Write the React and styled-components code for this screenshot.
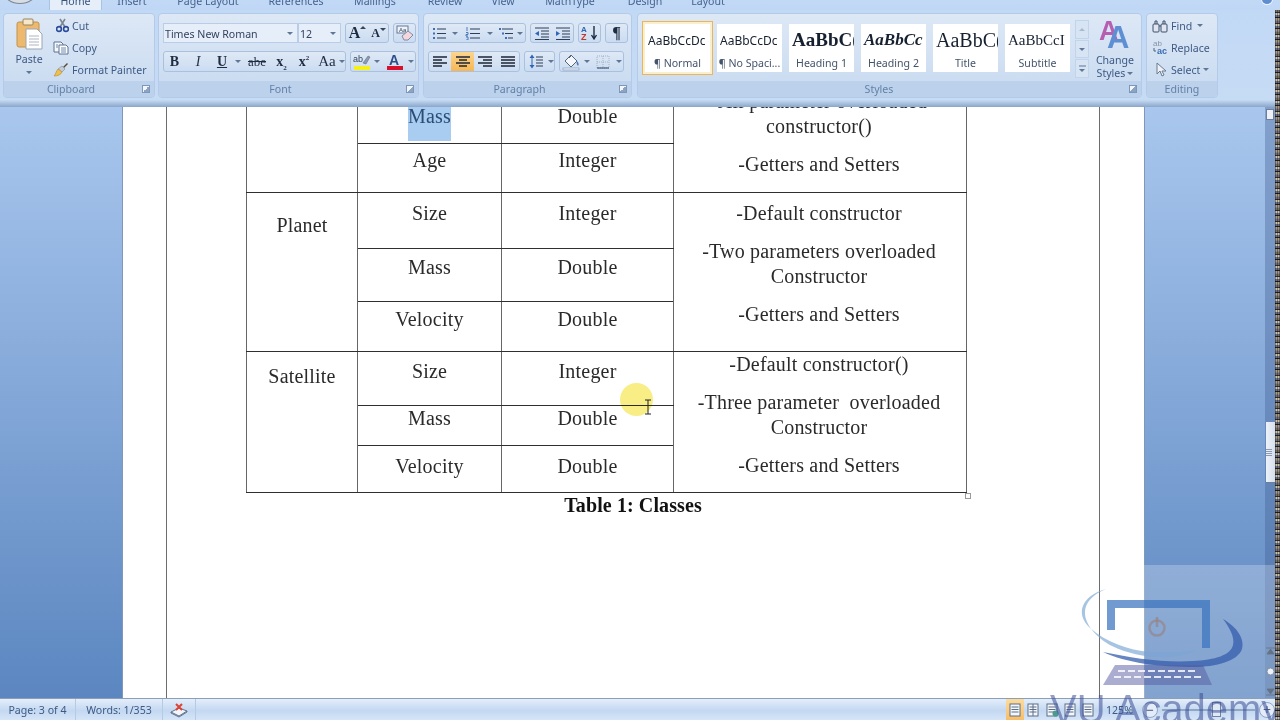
// Imports
import React from 'react';
import styled, { createGlobalStyle } from 'styled-components';

// Styles
const GlobalStyle = createGlobalStyle`
  html, body { margin: 0; padding: 0; background: #fff; }
  * { box-sizing: border-box; }
`;

const uiFont = `"Noto Sans", "Liberation Sans", sans-serif`;
const docFont = `"Liberation Serif", "Times New Roman", serif`;

const Window = styled.div`
  position: relative;
  width: 1280px;
  height: 720px;
  overflow: hidden;
  display: flex;
  flex-direction: column;
  font-family: ${uiFont};
  font-size: 10.6px;
  color: #3d5a84;
`;

const TabStrip = styled.div`
  position: relative;
  height: 10px;
  flex: none;
  display: flex;
  padding-left: 49px;
  background: linear-gradient(#c2d9f6, #bfd7f5);
  overflow: hidden;
`;

const Tab = styled.div`
  width: ${props => props.w}px;
  height: 10px;
  line-height: 2px;
  text-align: center;
  color: ${props => (props.active ? '#37557f' : '#46648f')};
  ${props => props.active && `
    background: #e6eff9;
    border-left: 1px solid #a9c3e2;
    border-right: 1px solid #a9c3e2;
  `}
`;

const OfficeOrb = styled.div`
  position: absolute;
  left: 4px;
  top: -18px;
  width: 32px;
  height: 22px;
  border-radius: 50%;
  background: #d8dde4;
  border: 1px solid #7d8794;
`;

const HelpOrb = styled.div`
  position: absolute;
  right: 7px;
  top: -6px;
  width: 12px;
  height: 11px;
  border-radius: 50%;
  background: #5f8ed0;
  border: 1px solid #f0f6ff;
`;

const Ribbon = styled.div`
  height: 97px;
  flex: none;
  display: flex;
  gap: 4px;
  padding: 3px 0 0 3px;
  background: linear-gradient(#c2d9f6 0, #c6dbf4 90px, #8aa6c9 97px);
`;

const Group = styled.section`
  width: ${props => props.w}px;
  height: 85px;
  flex: none;
  display: flex;
  flex-direction: column;
  margin-left: ${props => props.ml || 0}px;
  border: 1px solid #b3cbe8;
  border-radius: 4px;
  overflow: hidden;
  background: linear-gradient(#dde8f6, #c8daf0);
`;

const GroupBody = styled.div`
  flex: 1;
  min-height: 0;
  display: flex;
  padding: ${props => props.pad || '0'};
`;

const GroupLabel = styled.div`
  position: relative;
  height: 16px;
  flex: none;
  line-height: 17px;
  text-align: center;
  padding-right: ${props => (props.right === undefined ? 16 : props.right)}px;
  color: #6480a6;
  background: #bcd2ec;
`;

const Launcher = styled.span`
  position: absolute;
  right: 4px;
  top: 4px;
  width: 8px;
  height: 8px;
  border: 1px solid #7f97b6;
  background: linear-gradient(135deg, #f2f6fb 50%, #8ba4c4 50%);
`;

const PasteButton = styled.div`
  width: 48px;
  flex: none;
  display: flex;
  flex-direction: column;
  align-items: center;
  padding-top: 4px;
  line-height: 13px;
`;

const PasteLabel = styled.div`
  margin: 3px 0 5px;
`;

const SmallColumn = styled.div`
  display: flex;
  flex-direction: column;
  gap: 5px;
  padding-top: 3px;
`;

const SmallAction = styled.div`
  height: 17px;
  display: flex;
  align-items: center;
  gap: ${props => props.gap || 3}px;
  white-space: nowrap;
`;

const IconSlot = styled.span`
  display: block;
  margin-left: ${props => props.left || 0}px;
`;

const Stack = styled.div`
  flex: 1;
  display: flex;
  flex-direction: column;
  gap: 8px;
`;

const Row = styled.div`
  display: flex;
  gap: 4px;
`;

const GrowWrap = styled.div`
  display: flex;
  align-items: flex-start;
`;

const Field = styled.div`
  width: ${props => props.w}px;
  height: 20px;
  display: flex;
  align-items: center;
  justify-content: space-between;
  padding: 1px 4px 0 1px;
  background: #e6eef9;
  border: 1px solid #b9cde6;
  color: #33445e;
`;

const FieldPair = styled.div`
  display: flex;
`;

const ButtonGroup = styled.div`
  height: ${props => props.h || 21}px;
  display: flex;
  border: 1px solid #a9c1df;
  border-radius: 3px;
  background: linear-gradient(#dfe9f6, #cbdcf1);
  overflow: hidden;
`;

const ToolButton = styled.div`
  width: ${props => props.w}px;
  flex: none;
  display: flex;
  align-items: center;
  justify-content: center;
  color: #1d2c42;
  background: ${props => (props.active ? 'linear-gradient(#fbd58e, #f7b655)' : 'none')};
`;

const Glyph = styled.span`
  font-family: ${docFont};
  font-size: ${props => props.size || 14}px;
  font-weight: ${props => (props.plain ? 400 : 700)};
  font-style: ${props => (props.italic ? 'italic' : 'normal')};
  text-decoration: ${props => props.line || 'none'};
  line-height: 1;
  color: ${props => props.color || '#1d2c42'};
`;

const Sub = styled.sub`
  font-size: 7px;
  line-height: 0;
`;

const Sup = styled.sup`
  font-size: 7px;
  line-height: 0;
`;

const Caret = styled.i`
  display: block;
  flex: none;
  width: 0;
  height: 0;
  border-left: 3px solid transparent;
  border-right: 3px solid transparent;
  border-top: 3px solid ${props => props.color || '#5f7796'};
  margin-left: ${props => props.gap || 0}px;
  transform: ${props => (props.up ? 'rotate(180deg)' : 'none')};
`;

const Gallery = styled.div`
  display: flex;
  gap: 7px;
  padding: 10px 0 0 7px;
`;

const StyleTile = styled.div`
  width: 65px;
  height: 48px;
  flex: none;
  display: flex;
  flex-direction: column;
  align-items: center;
  background: #fff;
  overflow: hidden;
  ${props => props.selected && `
    box-shadow: 0 0 0 2px #fbeecb, 0 0 0 3px #e9b65f;
  `}
`;

const TileSample = styled.div`
  height: 32px;
  width: 100%;
  padding-left: 3px;
  display: flex;
  align-items: center;
  white-space: nowrap;
  overflow: hidden;
  font-family: ${props => (props.serif ? docFont : uiFont)};
  font-size: ${props => props.size}px;
  font-weight: ${props => (props.bold ? 700 : 400)};
  font-style: ${props => (props.italic ? 'italic' : 'normal')};
  color: #16202f;
`;

const TileName = styled.div`
  line-height: 14px;
  white-space: nowrap;
  color: #44546b;
`;

const GalleryArrows = styled.div`
  width: 14px;
  height: 58px;
  flex: none;
  margin: 6px 0 0 5px;
  display: flex;
  flex-direction: column;
  gap: 1px;
`;

const GalleryArrow = styled.div`
  flex: 1;
  display: flex;
  flex-direction: column;
  align-items: center;
  justify-content: center;
  gap: 2px;
  background: #d7e4f4;
  border: 1px solid #c1d4eb;
`;

const ChangeStyles = styled.div`
  width: 44px;
  flex: none;
  margin-left: 4px;
  padding-top: 5px;
  display: flex;
  flex-direction: column;
  align-items: center;
  line-height: 13px;
  text-align: center;
`;

const ChangeLabel = styled.div`
  margin-top: ${props => props.top || 0}px;
  display: flex;
  align-items: center;
  gap: 2px;
`;

const DocArea = styled.main`
  position: relative;
  flex: 1;
  min-height: 0;
  display: flex;
  overflow: hidden;
  padding-left: 123px;
  background: linear-gradient(#a9c7ee, #5b86c0);
`;

const Page = styled.div`
  width: 1021px;
  flex: none;
  padding: 0 44px 0 43px;
  background: #fff;
  box-shadow: -1px 0 0 #7f97b8, 1px 0 0 #7f97b8;
`;

const PageFrame = styled.div`
  display: flow-root;
  height: 100%;
  padding-left: 79px;
  border-left: 1px solid #6d6d6d;
  border-right: 1px solid #6d6d6d;
  font-family: ${docFont};
  font-size: 20px;
  line-height: 25px;
  letter-spacing: 0.2px;
  color: #2a2a2a;
`;

const TableWrap = styled.div`
  position: relative;
  width: 720px;
  margin-top: -20px;
`;

const ClassTable = styled.table`
  width: 720px;
  table-layout: fixed;
  border-collapse: collapse;
`;

const Column = styled.col`
  width: ${props => props.w}px;
`;

const TableRow = styled.tr`
  height: ${props => props.h}px;
`;

const Cell = styled.td`
  padding: ${props => props.top || 0}px ${props => (props.wide ? 2 : 0)}px 0 0;
  vertical-align: top;
  text-align: center;
  border-style: solid;
  border-width: 1px;
  border-color: #2f2f2f #666;
`;

const CellLine = styled.p`
  margin: 0 0 ${props => (props.gap === undefined ? 13 : props.gap)}px;
`;

const Selected = styled.span`
  padding: 9px 0 14px;
  background: #a9cdf0;
  color: #2b4c78;
`;

const ResizeHandle = styled.div`
  position: absolute;
  right: -5px;
  bottom: -6px;
  width: 6px;
  height: 6px;
  background: #fff;
  border: 1px solid #9a9a9a;
`;

const Caption = styled.div`
  margin-left: -79px;
  text-align: center;
  font-weight: 700;
  letter-spacing: 0.1px;
  color: #111;
`;

const Scrollbar = styled.div`
  position: relative;
  width: 10px;
  flex: none;
  margin-left: 121px;
  display: flex;
  flex-direction: column;
  justify-content: flex-end;
  align-items: center;
  gap: 12px;
  padding-bottom: 2px;
  background: rgba(60, 90, 140, 0.35);
`;

const RulerToggle = styled.div`
  position: absolute;
  left: 1px;
  top: 2px;
  width: 8px;
  height: 11px;
  border: 1px solid #6b7f9b;
  background: #eef2f8;
`;

const ScrollThumb = styled.div`
  position: absolute;
  left: 1px;
  top: 315px;
  width: 9px;
  height: 61px;
  display: flex;
  align-items: center;
  background: linear-gradient(90deg, #eef2f9, #d5dfee);
  border-bottom: 1px solid #6b7f9b;
`;

const ThumbGrip = styled.div`
  width: 6px;
  height: 7px;
  background: repeating-linear-gradient(#8c9ab0 0 1px, transparent 1px 2px);
`;

const NoiseStrip = styled.div`
  position: absolute;
  right: 0;
  top: 10px;
  bottom: 0;
  width: 5px;
  z-index: 5;
  background:
    repeating-linear-gradient(90deg, rgba(0, 0, 0, 0.35) 0 1px, transparent 1px 2px),
    repeating-linear-gradient(#77715f 0 2px, #2e2a45 2px 3px, #c9c2a4 3px 5px, #6a6f86 5px 7px, #1f1f22 7px 8px, #a89a7d 8px 10px, #8d84a6 10px 11px);
`;

const Highlighter = styled.div`
  position: absolute;
  left: 620px;
  top: 383px;
  width: 33px;
  height: 33px;
  border-radius: 50%;
  background: #f8ee85;
  mix-blend-mode: multiply;
`;

const IBeam = styled.svg`
  position: absolute;
  left: 644px;
  top: 399px;
`;

const WatermarkPanel = styled.div`
  position: absolute;
  left: 1144px;
  top: 565px;
  width: 136px;
  height: 133px;
  background: rgba(255, 255, 255, 0.24);
`;

const WatermarkLogo = styled.svg`
  position: absolute;
  left: 1050px;
  top: 565px;
  z-index: 3;
`;

const WatermarkText = styled.div`
  position: absolute;
  left: 1050px;
  top: 686px;
  z-index: 3;
  font-family: "Liberation Sans", sans-serif;
  font-size: 40px;
  line-height: 46px;
  white-space: nowrap;
  color: rgba(58, 76, 150, 0.55);
`;

const StatusBar = styled.footer`
  height: 22px;
  flex: none;
  display: flex;
  align-items: stretch;
  border-top: 1px solid #8c9fb8;
  background: linear-gradient(#e4eefb, #c3d8f1 55%, #d6e5f8);
  color: #3d5a84;
`;

const StatusCell = styled.div`
  width: ${props => props.w}px;
  flex: none;
  display: flex;
  align-items: center;
  justify-content: center;
  white-space: nowrap;
  border-right: 1px solid #b5cae4;
`;

const StatusRight = styled.div`
  margin-left: auto;
  display: flex;
  align-items: center;
  padding-right: 5px;
`;

const ViewButton = styled.div`
  width: 18.2px;
  height: 21px;
  display: flex;
  align-items: center;
  justify-content: center;
  background: ${props => (props.active ? 'linear-gradient(#fbdc9e, #f6bd69)' : 'none')};
`;

const ZoomLabel = styled.div`
  width: 45px;
  text-align: center;
`;

const ZoomRound = styled.div`
  width: 16px;
  height: 16px;
  flex: none;
  display: flex;
  align-items: center;
  justify-content: center;
  border-radius: 50%;
  border: 1px solid #8fa6c4;
  background: #e3ecf8;
  font-size: 14px;
  line-height: 1;
  color: #4a5f7d;
`;

const ZoomTrack = styled.div`
  position: relative;
  width: 93px;
  height: 2px;
  margin: 0 4px;
  background: #8fa6c4;
`;

const ZoomThumb = styled.div`
  position: absolute;
  left: 50px;
  top: -7px;
  width: 9px;
  height: 15px;
  border: 1px solid #6f84a1;
  background: #dfe8f5;
`;

const IconSvg = styled.svg`
  display: block;
  flex: none;
`;

// Icons
const Svg = ({ w, h, children }) => (
  <IconSvg width={w} height={h} viewBox={`0 0 ${w} ${h}`}>
    {children}
  </IconSvg>
);

const PasteIcon = () => (
  <Svg w={27} h={32}>
    <rect x="1" y="4" width="22" height="25" rx="2" fill="#edb96e" stroke="#c4914a" />
    <rect x="7" y="1" width="10" height="6" rx="1" fill="#f6e7c6" stroke="#96845f" />
    <path d="M10 11h11l5 5v15H10z" fill="#fff" stroke="#9aa5b5" />
    <path d="M13 18h10M13 21h10M13 24h10M13 27h10" stroke="#aeb6c2" />
  </Svg>
);

const CutIcon = () => (
  <Svg w={13} h={15}>
    <path d="M4 1l5 8M9 1L4 9" stroke="#7c8794" strokeWidth="1.6" fill="none" />
    <circle cx="3" cy="11" r="2.4" fill="none" stroke="#2b4c9b" strokeWidth="1.6" />
    <circle cx="10" cy="11" r="2.4" fill="none" stroke="#2b4c9b" strokeWidth="1.6" />
  </Svg>
);

const CopyIcon = () => (
  <Svg w={16} h={14}>
    <path d="M1 1h7l2 2v8H1z" fill="#f5f8fc" stroke="#5d7392" />
    <path d="M6 4h7l2 2v7H6z" fill="#fff" stroke="#5d7392" />
    <path d="M8 7h5M8 9h5M8 11h5M3 4h2M3 6h2" stroke="#6d89b0" />
  </Svg>
);

const BrushIcon = () => (
  <Svg w={16} h={15}>
    <path d="M10 5l4-4 1 1-4 4z" fill="#5b4a33" />
    <path d="M9 4l3 3-3 3-4-3z" fill="#c6ccd6" stroke="#7e8898" strokeWidth=".6" />
    <path d="M5 7l4 3c-1 3-5 4-8 4 2-2 2-5 4-7z" fill="#efc04c" stroke="#b58a2a" strokeWidth=".6" />
  </Svg>
);

const GrowIcon = ({ size, up }) => (
  <GrowWrap>
    <Glyph size={size}>A</Glyph>
    <IconSvg width="6" height="4">
      <path d={up ? 'M0 4l3-3 3 3z' : 'M0 1l3 3 3-3z'} fill="#33465f" />
    </IconSvg>
  </GrowWrap>
);

const ClearIcon = () => (
  <Svg w={18} h={16}>
    <rect x="1" y="1" width="11" height="7" fill="#eef3fa" stroke="#65789a" />
    <text x="3" y="7" fontSize="6" fontFamily="Liberation Sans" fill="#33465f">Aa</text>
    <path d="M6 11l6-5 5 4-5 5H8z" fill="#f4d6dc" stroke="#7d8ca3" />
  </Svg>
);

const HighlightIcon = () => (
  <Svg w={18} h={18}>
    <text x="0" y="9" fontSize="9" fontFamily="Liberation Sans" fill="#33465f">ab</text>
    <path d="M10 10l5-7 2 1-4 7z" fill="#8b9cb5" stroke="#52637c" strokeWidth=".5" />
    <rect x="1" y="13" width="16" height="4" fill="#f6f01a" />
  </Svg>
);

const FontColorIcon = () => (
  <Svg w={16} h={18}>
    <text x="2" y="12" fontSize="14" fontWeight="700" fontFamily="Liberation Sans" fill="#2f4d86">A</text>
    <rect x="0" y="13" width="16" height="4" fill="#d9102a" />
  </Svg>
);

const BulletsIcon = () => (
  <Svg w={14} h={13}>
    <path d="M5 2h9M5 6.500h9M5 11h9" stroke="#2c3e58" strokeWidth="1.2" />
    <path d="M1 1h2v2H1zM1 5.500h2v2H1zM1 10h2v2H1z" fill="#3f6fb3" />
  </Svg>
);

const NumbersIcon = () => (
  <Svg w={15} h={13}>
    <path d="M5 2h10M5 6.500h10M5 11h10" stroke="#2c3e58" strokeWidth="1.2" />
    <path d="M2 0v4M1 5.500h2v2H1v1.500h2M1 10h2v3H1" stroke="#3f6fb3" fill="none" strokeWidth=".9" />
  </Svg>
);

const MultiLevelIcon = () => (
  <Svg w={16} h={13}>
    <path d="M4 2h11M7 6.500h8M10 11h5" stroke="#2c3e58" />
    <path d="M1 1h2v2H1zM4 5.500h2v2H4zM7 10h2v2H7z" fill="#3f6fb3" />
  </Svg>
);

const IndentIcon = ({ inward }) => (
  <Svg w={16} h={13}>
    <path d="M1 1h14M7 4h8M7 7h8M7 10h8M1 12.500h14" stroke="#2c3e58" />
    <path d={inward ? 'M1 4l4 2.500L1 9z' : 'M5 4L1 6.500 5 9z'} fill="#2f66b5" />
  </Svg>
);

const SortIcon = () => (
  <Svg w={18} h={16}>
    <text x="0" y="7" fontSize="8" fontWeight="700" fontFamily="Liberation Sans" fill="#2f66b5">A</text>
    <text x="0" y="15" fontSize="9" fontWeight="700" fontFamily="Liberation Sans" fill="#c0392b">Z</text>
    <path d="M13 1v12M10.500 10l2.500 4 2.500-4" stroke="#1d2c42" strokeWidth="1.4" fill="none" />
  </Svg>
);

const alignRows = {
  left: ['M1 2h14', 'M1 5h9', 'M1 8h14', 'M1 11h9'],
  center: ['M1 2h14', 'M4 5h8', 'M1 8h14', 'M4 11h8'],
  right: ['M1 2h14', 'M6 5h9', 'M1 8h14', 'M6 11h9'],
  both: ['M1 2h14', 'M1 5h14', 'M1 8h14', 'M1 11h14'],
};

const AlignIcon = ({ mode }) => (
  <Svg w={16} h={13}>
    {alignRows[mode].map(d => <path key={d} d={d} stroke="#1b2536" strokeWidth="1.3" />)}
  </Svg>
);

const LineSpaceIcon = () => (
  <Svg w={14} h={15}>
    <path d="M3 3v9" stroke="#2f66b5" />
    <path d="M0.500 4L3 0.500 5.500 4zM0.500 11L3 14.500 5.500 11z" fill="#2f66b5" />
    <path d="M7 3h7M7 6h7M7 9h7M7 12h7" stroke="#2c3e58" strokeWidth="1.1" />
  </Svg>
);

const ShadingIcon = () => (
  <Svg w={20} h={18}>
    <path d="M4 8l6-6 6 6-6 6z" fill="#f4f7fb" stroke="#55667f" />
    <path d="M16 8c2 2 2 4 1 5-1-1-2-3-1-5z" fill="#4d78b8" />
    <path d="M8 5l3-3" stroke="#55667f" />
    <rect x="2" y="15" width="16" height="2" fill="#e8f0fa" stroke="#7e92ae" strokeWidth=".6" />
  </Svg>
);

const BordersIcon = () => (
  <Svg w={14} h={14}>
    <rect x="1" y="1" width="12" height="12" fill="none" stroke="#9fb0c6" strokeDasharray="1 1" />
    <path d="M1 7h12M7 1v12" stroke="#9fb0c6" strokeDasharray="1 1" />
    <path d="M1 13h12" stroke="#2c3e58" />
  </Svg>
);

const ChangeStylesIcon = () => (
  <Svg w={36} h={30}>
    <text x="2" y="21" fontSize="27" fontWeight="700" fontFamily="Liberation Sans" fill="#b65fb0">A</text>
    <text x="10" y="29" fontSize="31" fontWeight="700" fontFamily="Liberation Sans" fill="#5f8fd3">A</text>
  </Svg>
);

const FindIcon = () => (
  <Svg w={16} h={14}>
    <rect x="1" y="5" width="6" height="8" rx="1" fill="#dfe6ef" stroke="#3d4f6b" />
    <rect x="9" y="5" width="6" height="8" rx="1" fill="#dfe6ef" stroke="#3d4f6b" />
    <path d="M3 5V2h2v3M11 5V2h2v3M7 7h2" stroke="#3d4f6b" fill="none" />
  </Svg>
);

const ReplaceIcon = () => (
  <Svg w={18} h={17}>
    <text x="1" y="7" fontSize="8" fontFamily="Liberation Sans" fill="#8493a8">ab</text>
    <text x="5" y="15" fontSize="9" fontWeight="700" fontFamily="Liberation Sans" fill="#3a6cb3">ac</text>
    <path d="M2 9v3h2" stroke="#51627b" fill="none" />
  </Svg>
);

const SelectIcon = () => (
  <Svg w={13} h={16}>
    <path d="M2 1v11l3-3 2 5 2-1-2-4h4z" fill="#eef2f7" stroke="#6a7a90" />
  </Svg>
);

const SpellIcon = () => (
  <Svg w={18} h={16}>
    <path d="M1 10l8-4 8 3-8 5z" fill="#f2f5fa" stroke="#62738e" />
    <path d="M1 10v1l8 4 8-5V9" fill="none" stroke="#62738e" />
    <path d="M6 2l6 6M12 2L6 8" stroke="#dc4435" strokeWidth="2" />
  </Svg>
);

const ViewIcon = ({ kind }) => (
  <Svg w={14} h={14}>
    <rect x="2" y="1" width="10" height="12" fill="#f4f7fb" stroke="#5d6f89" />
    <path d="M3.500 4h7M3.500 6.500h7M3.500 9h7" stroke="#5d6f89" />
    {kind === 'read' && <path d="M7 1v12" stroke="#5d6f89" />}
    {kind === 'web' && <circle cx="10.500" cy="10.500" r="3" fill="#4c9a8e" />}
  </Svg>
);

const BrowseUp = () => (
  <Svg w={9} h={8}>
    <path d="M0 1h9M4.500 2L8 7H1z" stroke="#33465f" strokeWidth=".8" fill="#33465f" />
  </Svg>
);

const BrowseDot = () => (
  <Svg w={9} h={9}>
    <circle cx="4.500" cy="4.500" r="3.500" fill="#e8eef7" stroke="#5d6f89" />
  </Svg>
);

const BrowseDown = () => (
  <Svg w={9} h={8}>
    <path d="M0 7h9M4.500 6L8 1H1z" stroke="#33465f" strokeWidth=".8" fill="#33465f" />
  </Svg>
);

// Data
const tabs = [
  ['Home', 53, true], ['Insert', 60], ['Page Layout', 92], ['References', 84], ['Mailings', 74],
  ['Review', 66], ['View', 50], ['MathType', 84], ['Design', 66], ['Layout', 60],
];

const tiles = [
  { name: '¶ Normal', sample: 'AaBbCcDc', size: 12, selected: true },
  { name: '¶ No Spaci...', sample: 'AaBbCcDc', size: 12 },
  { name: 'Heading 1', sample: 'AaBbC(', size: 19, serif: true, bold: true },
  { name: 'Heading 2', sample: 'AaBbCc', size: 17, serif: true, bold: true, italic: true },
  { name: 'Title', sample: 'AaBbC(', size: 20, serif: true },
  { name: 'Subtitle', sample: 'AaBbCcI', size: 15, serif: true },
];

// Main
const App = () => (
  <Window>
    <GlobalStyle />

    {/* Tabs */}
    <TabStrip>
      <OfficeOrb />
      {tabs.map(([name, w, active]) => <Tab key={name} w={w} active={active}>{name}</Tab>)}
      <HelpOrb />
    </TabStrip>

    {/* Ribbon */}
    <Ribbon>
      <Group w={152}>
        <GroupBody pad="0 0 0 1px">
          <PasteButton>
            <PasteIcon />
            <PasteLabel>Paste</PasteLabel>
            <Caret />
          </PasteButton>
          <SmallColumn>
            <SmallAction><IconSlot left={3}><CutIcon /></IconSlot>Cut</SmallAction>
            <SmallAction><CopyIcon />Copy</SmallAction>
            <SmallAction><BrushIcon />Format Painter</SmallAction>
          </SmallColumn>
        </GroupBody>
        <GroupLabel>Clipboard<Launcher /></GroupLabel>
      </Group>

      <Group w={261} ml={-1}>
        <GroupBody pad="9px 0 0 4px">
          <Stack>
            <Row>
              <FieldPair>
                <Field w={135}>Times New Roman<Caret /></Field>
                <Field w={43}>12<Caret /></Field>
              </FieldPair>
              <ButtonGroup h={20}>
                <ToolButton w={23}><GrowIcon size={16} up /></ToolButton>
                <ToolButton w={19}><GrowIcon size={12} /></ToolButton>
              </ButtonGroup>
              <ButtonGroup h={20}>
                <ToolButton w={21}><ClearIcon /></ToolButton>
              </ButtonGroup>
            </Row>
            <Row>
              <ButtonGroup>
                <ToolButton w={21}><Glyph>B</Glyph></ToolButton>
                <ToolButton w={26}><Glyph italic plain>I</Glyph></ToolButton>
                <ToolButton w={22}><Glyph line="underline">U</Glyph></ToolButton>
                <ToolButton w={10}><Caret /></ToolButton>
                <ToolButton w={28}><Glyph size={13} plain line="line-through">abe</Glyph></ToolButton>
                <ToolButton w={21}><Glyph>x<Sub>2</Sub></Glyph></ToolButton>
                <ToolButton w={24}><Glyph>x<Sup>2</Sup></Glyph></ToolButton>
                <ToolButton w={22}><Glyph size={15} plain>Aa</Glyph></ToolButton>
                <ToolButton w={7}><Caret /></ToolButton>
              </ButtonGroup>
              <ButtonGroup>
                <ToolButton w={21}><HighlightIcon /></ToolButton>
                <ToolButton w={10}><Caret /></ToolButton>
                <ToolButton w={25}><FontColorIcon /></ToolButton>
                <ToolButton w={8}><Caret /></ToolButton>
              </ButtonGroup>
            </Row>
          </Stack>
        </GroupBody>
        <GroupLabel>Font<Launcher /></GroupLabel>
      </Group>

      <Group w={209}>
        <GroupBody pad="9px 0 0 4px">
          <Stack>
            <Row>
              <ButtonGroup h={20}>
                <ToolButton w={20}><BulletsIcon /></ToolButton>
                <ToolButton w={12}><Caret /></ToolButton>
                <ToolButton w={23}><NumbersIcon /></ToolButton>
                <ToolButton w={12}><Caret /></ToolButton>
                <ToolButton w={19}><MultiLevelIcon /></ToolButton>
                <ToolButton w={10}><Caret /></ToolButton>
              </ButtonGroup>
              <ButtonGroup h={20}>
                <ToolButton w={21}><IndentIcon /></ToolButton>
                <ToolButton w={21}><IndentIcon inward /></ToolButton>
              </ButtonGroup>
              <ButtonGroup h={20}>
                <ToolButton w={21}><SortIcon /></ToolButton>
              </ButtonGroup>
              <ButtonGroup h={20}>
                <ToolButton w={21}><Glyph size={16}>¶</Glyph></ToolButton>
              </ButtonGroup>
            </Row>
            <Row>
              <ButtonGroup>
                <ToolButton w={22}><AlignIcon mode="left" /></ToolButton>
                <ToolButton w={23} active><AlignIcon mode="center" /></ToolButton>
                <ToolButton w={22}><AlignIcon mode="right" /></ToolButton>
                <ToolButton w={23}><AlignIcon mode="both" /></ToolButton>
              </ButtonGroup>
              <ButtonGroup>
                <ToolButton w={22}><LineSpaceIcon /></ToolButton>
                <ToolButton w={7}><Caret /></ToolButton>
              </ButtonGroup>
              <ButtonGroup>
                <ToolButton w={22}><ShadingIcon /></ToolButton>
                <ToolButton w={9}><Caret /></ToolButton>
                <ToolButton w={23}><BordersIcon /></ToolButton>
                <ToolButton w={9}><Caret /></ToolButton>
              </ButtonGroup>
            </Row>
          </Stack>
        </GroupBody>
        <GroupLabel>Paragraph<Launcher /></GroupLabel>
      </Group>

      <Group w={505} ml={1}>
        <GroupBody>
          <Gallery>
            {tiles.map(t => (
              <StyleTile key={t.name} selected={t.selected}>
                <TileSample size={t.size} serif={t.serif} bold={t.bold} italic={t.italic}>{t.sample}</TileSample>
                <TileName>{t.name}</TileName>
              </StyleTile>
            ))}
          </Gallery>
          <GalleryArrows>
            <GalleryArrow><Caret up color="#a9b9cf" /></GalleryArrow>
            <GalleryArrow><Caret /></GalleryArrow>
            <GalleryArrow>
              <IconSvg width="7" height="2"><path d="M0 1h7" stroke="#5f7796" /></IconSvg>
              <Caret />
            </GalleryArrow>
          </GalleryArrows>
          <ChangeStyles>
            <ChangeStylesIcon />
            <ChangeLabel top={5}>Change</ChangeLabel>
            <ChangeLabel>Styles<Caret /></ChangeLabel>
          </ChangeStyles>
        </GroupBody>
        <GroupLabel right={21}>Styles<Launcher /></GroupLabel>
      </Group>

      <Group w={72}>
        <GroupBody pad="0 0 0 5px">
          <SmallColumn>
            <SmallAction><FindIcon />Find<Caret gap={2} /></SmallAction>
            <SmallAction gap={1}><ReplaceIcon />Replace</SmallAction>
            <SmallAction><IconSlot left={3}><SelectIcon /></IconSlot>Select<Caret /></SmallAction>
          </SmallColumn>
        </GroupBody>
        <GroupLabel right={0}>Editing</GroupLabel>
      </Group>
    </Ribbon>

    {/* Document */}
    <DocArea>
      <Page>
        <PageFrame>
          <TableWrap>
            <ClassTable>
              <colgroup>
                <Column w={111} />
                <Column w={144} />
                <Column w={172} />
                <Column w={293} />
              </colgroup>
              <tbody>
                <TableRow h={56}>
                  <Cell rowSpan={2} />
                  <Cell top={16}><Selected>Mass</Selected></Cell>
                  <Cell top={16}>Double</Cell>
                  <Cell rowSpan={2} top={1} wide>
                    <CellLine gap={0}>-All parameter overloaded</CellLine>
                    <CellLine>constructor()</CellLine>
                    <CellLine>-Getters and Setters</CellLine>
                  </Cell>
                </TableRow>
                <TableRow h={49}>
                  <Cell top={4}>Age</Cell>
                  <Cell top={4}>Integer</Cell>
                </TableRow>
                <TableRow h={56}>
                  <Cell rowSpan={3} top={20}>Planet</Cell>
                  <Cell top={8}>Size</Cell>
                  <Cell top={8}>Integer</Cell>
                  <Cell rowSpan={3} top={8} wide>
                    <CellLine gap={13}>-Default constructor</CellLine>
                    <CellLine gap={0}>-Two parameters overloaded</CellLine>
                    <CellLine>Constructor</CellLine>
                    <CellLine>-Getters and Setters</CellLine>
                  </Cell>
                </TableRow>
                <TableRow h={53}>
                  <Cell top={6}>Mass</Cell>
                  <Cell top={6}>Double</Cell>
                </TableRow>
                <TableRow h={50}>
                  <Cell top={5}>Velocity</Cell>
                  <Cell top={5}>Double</Cell>
                </TableRow>
                <TableRow h={54}>
                  <Cell rowSpan={3} top={12}>Satellite</Cell>
                  <Cell top={7}>Size</Cell>
                  <Cell top={7}>Integer</Cell>
                  <Cell rowSpan={3} wide>
                    <CellLine>-Default constructor()</CellLine>
                    <CellLine gap={0}>-Three parameter&nbsp; overloaded</CellLine>
                    <CellLine>Constructor</CellLine>
                    <CellLine gap={0}>-Getters and Setters</CellLine>
                  </Cell>
                </TableRow>
                <TableRow h={40}>
                  <Cell>Mass</Cell>
                  <Cell>Double</Cell>
                </TableRow>
                <TableRow h={47}>
                  <Cell top={8}>Velocity</Cell>
                  <Cell top={8}>Double</Cell>
                </TableRow>
              </tbody>
            </ClassTable>
            <ResizeHandle />
          </TableWrap>
          <Caption>Table 1: Classes</Caption>
        </PageFrame>
      </Page>
      <Scrollbar>
        <RulerToggle />
        <ScrollThumb><ThumbGrip /></ScrollThumb>
        <BrowseUp />
        <BrowseDot />
        <BrowseDown />
      </Scrollbar>
    </DocArea>

    {/* Status bar */}
    <StatusBar>
      <StatusCell w={76}>Page: 3 of 4</StatusCell>
      <StatusCell w={87}>Words: 1/353</StatusCell>
      <StatusCell w={33}><SpellIcon /></StatusCell>
      <StatusRight>
        <ViewButton active><ViewIcon /></ViewButton>
        <ViewButton><ViewIcon kind="read" /></ViewButton>
        <ViewButton><ViewIcon kind="web" /></ViewButton>
        <ViewButton><ViewIcon /></ViewButton>
        <ViewButton><ViewIcon /></ViewButton>
        <ZoomLabel>125%</ZoomLabel>
        <ZoomRound>−</ZoomRound>
        <ZoomTrack><ZoomThumb /></ZoomTrack>
        <ZoomRound>+</ZoomRound>
      </StatusRight>
    </StatusBar>

    {/* Overlays */}
    <Highlighter />
    <IBeam width="8" height="16" viewBox="0 0 8 16">
      <path d="M1 1h6M4 1v14M1 15h6" stroke="#222" fill="none" />
    </IBeam>
    <WatermarkPanel />
    <WatermarkLogo width="230" height="155" viewBox="1050 565 230 155">
      <path d="M1106 589C1081 596 1075 614 1090 628c16 14 38 22 60 24 14 1 30 1 46-2-22 12-60 8-84-4-26-14-42-42-6-57z" fill="rgba(122,165,212,.65)" />
      <path d="M1107 600h103v48h-8v-40h-87v22h-8z" fill="rgba(58,116,190,.72)" />
      <circle cx="1157" cy="628" r="7.500" fill="none" stroke="rgba(150,130,130,.65)" strokeWidth="2.500" />
      <path d="M1157 617v10" stroke="rgba(150,130,130,.65)" strokeWidth="2.500" />
      <path d="M1223 619c14 8 22 20 19 30-4 12-26 18-48 18-34 0-68-4-91-15 28 6 62 11 90 9 22-1 38-6 40-16 2-8-4-18-10-26z" fill="rgba(52,92,172,.75)" />
      <path d="M1115 665h88l9 20h-109z" fill="rgba(86,92,160,.5)" />
      <path d="M1118 671h80M1114 677h88" stroke="rgba(255,255,255,.8)" strokeWidth="2" strokeDasharray="7 3" />
    </WatermarkLogo>
    <WatermarkText>VU Academy</WatermarkText>
    <NoiseStrip />
  </Window>
);

export default App;
